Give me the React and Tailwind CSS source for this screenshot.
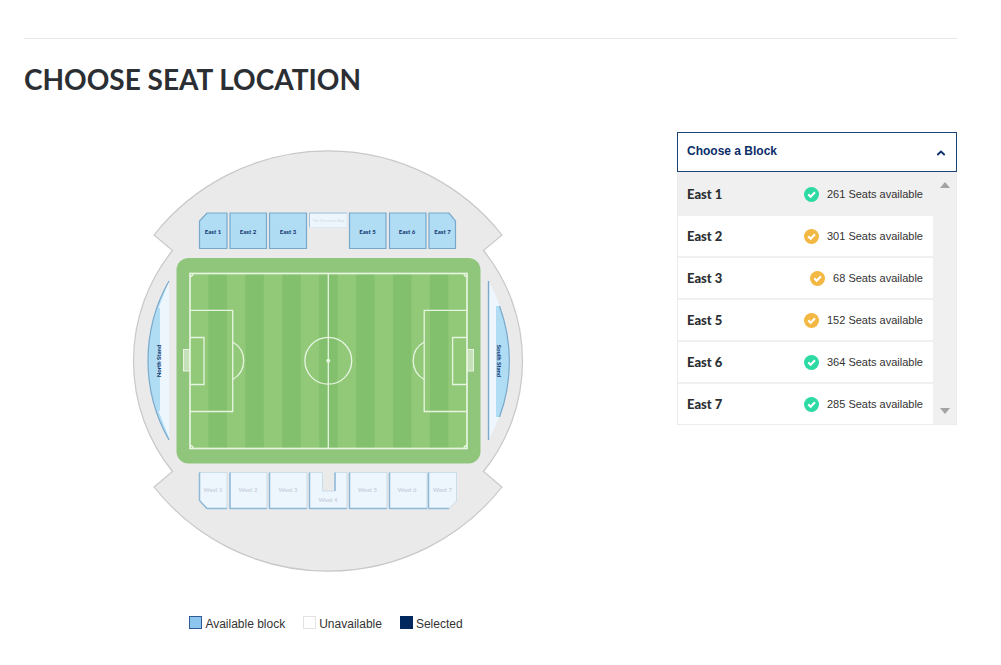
import React, { useState } from "react";

const blocks = [
  { name: "East 1", seats: 261, color: "#2edaa3" },
  { name: "East 2", seats: 301, color: "#f3b843" },
  { name: "East 3", seats: 68, color: "#f3b843" },
  { name: "East 5", seats: 152, color: "#f3b843" },
  { name: "East 6", seats: 364, color: "#2edaa3" },
  { name: "East 7", seats: 285, color: "#2edaa3" },
];

const eastStand = [
  { name: "East 1", x: 213, points: "207,213 227,213 227,248.5 199.5,248.5 199.5,221" },
  { name: "East 2", x: 248, points: "230,213 266.5,213 266.5,248.5 230,248.5" },
  { name: "East 3", x: 288, points: "269.5,213 306.5,213 306.5,248.5 269.5,248.5" },
  { name: "East 5", x: 367.5, points: "349.5,213 386,213 386,248.5 349.5,248.5" },
  { name: "East 6", x: 407, points: "389.5,213 426,213 426,248.5 389.5,248.5" },
  { name: "East 7", x: 442.5, points: "429,213 449,213 455.5,221 455.5,248.5 429,248.5" },
];

// edge is the shaded left / bottom side of each closed block
const westStand = [
  { name: "West 1", x: 213, y: 492, points: "199.5,472.5 227,472.5 227,508.5 207,508.5 199.5,500.5", edge: "M199.5 472.5V500.5L207 508.5H227" },
  { name: "West 2", x: 248, y: 492, points: "230,472.5 267,472.5 267,508.5 230,508.5", edge: "M230 472.5V508.5H267" },
  { name: "West 3", x: 288, y: 492, points: "269.5,472.5 307,472.5 307,508.5 269.5,508.5", edge: "M269.5 472.5V508.5H307" },
  { name: "West 4", x: 328, y: 502, points: "309.5,472.5 322.5,472.5 322.5,491 335,491 335,472.5 347,472.5 347,508.5 309.5,508.5", edge: "M309.5 472.5V508.5H347M335 491V472.5" },
  { name: "West 5", x: 367.5, y: 492, points: "349.5,472.5 387,472.5 387,508.5 349.5,508.5", edge: "M349.5 472.5V508.5H387" },
  { name: "West 6", x: 407, y: 492, points: "389.5,472.5 427,472.5 427,508.5 389.5,508.5", edge: "M389.5 472.5V508.5H427" },
  { name: "West 7", x: 442.5, y: 492, points: "428.5,472.5 456.5,472.5 456.5,501 449,508.5 428.5,508.5", edge: "M428.5 472.5V508.5H449" },
];

const stripes = [0, 1, 2, 3, 4, 5, 6];

const Pitch = () => (
  <g>
    <rect x="176.5" y="258" width="304" height="205.5" rx="12" fill="#90c67c" />
    <rect x="190" y="273.5" width="277" height="175" fill="#91c979" />
    {stripes.map((i) => (
      <rect key={i} x={208.5 + i * 36.9} y="273.5" width="18.45" height="175" fill="#83c06e" />
    ))}
    <g fill="none" stroke="#e6f4e0" strokeWidth="1.3">
      <rect x="190" y="273.5" width="277" height="175" strokeWidth="1.7" />
      <path d="M328.3 273.5V448.5" />
      <circle cx="328.3" cy="360.8" r="23.4" />
      <path d="M190 310.3H232.7V411.5H190M190 337.5H204V384.5H190" />
      <path d="M232.7 342A21.5 21.5 0 0 1 232.7 379.5" />
      <path d="M467 310.3H424.2V411.5H467M467 337.5H452.6V384.5H467" />
      <path d="M424.2 342A21.5 21.5 0 0 0 424.2 379.5" />
      <path d="M193 273.5A3 3 0 0 1 190 276.5M464 273.5A3 3 0 0 0 467 276.5M193 448.5A3 3 0 0 0 190 445.5M464 448.5A3 3 0 0 1 467 445.5" />
    </g>
    <g fill="#c5e1b9" stroke="#e6f4e0">
      <rect x="183.5" y="349.5" width="6" height="21.5" />
      <rect x="467.5" y="349.5" width="6" height="21.5" />
    </g>
    <circle cx="328.3" cy="360.8" r="2" fill="#e6f4e0" />
  </g>
);

const StadiumMap = () => (
  <svg
    viewBox="128 146 400 430"
    role="img"
    aria-label="Stadium map"
    className="w-full max-w-[400px] font-['Lato',sans-serif] text-[6px] font-black"
  >
    <path
      d="M154 235A222 222 0 0 1 502 235L483.5 250.5A176 176 0 0 1 483.5 471.5L502 487A222 222 0 0 1 154 487L172.5 471.5A176 176 0 0 1 172.5 250.5Z"
      fill="#eaeaea"
      stroke="#c8c8c8"
      strokeWidth="1.2"
    />
    <Pitch />

    {/* North stand */}
    <path d="M169 281A161 161 0 0 0 169 440Z" fill="#b0dcf4" />
    <path d="M169 281L160 308V411H158.5L169 438Z" fill="#edf6fd" />
    <path d="M169 281L158.5 308H161L169 300Z" fill="#edf6fd" />
    <path d="M169 281A161 161 0 0 0 169 440" fill="none" stroke="#78a9cb" strokeWidth="1.2" />
    <text transform="translate(160.5 361) rotate(-90)" textAnchor="middle" fill="#173e75">North Stand</text>

    {/* South stand */}
    <path d="M488.5 281A161 161 0 0 1 488.5 440Z" fill="#edf6fd" />
    <path d="M496 306H499.5A161 161 0 0 1 499.5 417H496Z" fill="#b0dcf4" />
    <path d="M499.5 306A161 161 0 0 1 499.5 417" fill="none" stroke="#78a9cb" strokeWidth="1.2" />
    <path d="M488.5 281V440" stroke="#78a9cb" strokeWidth="1.4" />
    <text transform="translate(496.5 361) rotate(90)" textAnchor="middle" fill="#173e75">South Stand</text>

    {eastStand.map((b) => (
      <g key={b.name}>
        <polygon points={b.points} fill="#b0dcf4" stroke="#78a9cb" strokeWidth="1.2" />
        <text x={b.x} y="234" textAnchor="middle" fill="#173e75">{b.name}</text>
      </g>
    ))}

    <rect x="309.5" y="213" width="37.5" height="14.5" fill="#edf6fd" stroke="#dfe8ef" />
    <path d="M309.5 227V213H347" fill="none" stroke="#9fc2da" />
    <text x="328.5" y="221.5" textAnchor="middle" fill="#cfd8e4" className="text-[4px] font-normal">The Directors Box</text>

    {westStand.map((b) => (
      <g key={b.name}>
        <polygon points={b.points} fill="#edf6fd" stroke="#c3d8e6" strokeWidth="0.8" />
        <path d={b.edge} fill="none" stroke="#8fb9d6" strokeWidth="1.5" />
        <text x={b.x} y={b.y} textAnchor="middle" fill="#c9d0de" className="font-bold">{b.name}</text>
      </g>
    ))}
  </svg>
);

const CheckIcon = ({ color }) => (
  <svg viewBox="0 0 15 15" className="size-[15px]" aria-hidden="true">
    <circle cx="7.5" cy="7.5" r="7.5" fill={color} />
    <path d="M4.3 7.4L6.7 9.7L11 5.3" fill="none" stroke="#fff" strokeWidth="2.2" />
  </svg>
);

const BlockPicker = () => {
  const [open, setOpen] = useState(true);
  const [selected, setSelected] = useState("East 1");

  return (
    <div>
      <button
        type="button"
        aria-haspopup="listbox"
        aria-expanded={open}
        onClick={() => setOpen(!open)}
        className="flex h-10 w-full items-center justify-between border border-[#1d4379] bg-white pr-[10px] pl-[9px] text-[#0b2e69]"
      >
        <span className="pb-[2px] text-[12px] leading-4 font-bold">Choose a Block</span>
        <svg viewBox="0 0 10 6" className="mt-[2px] h-[6px] w-[10px]" aria-hidden="true">
          <path d="M1.3 5L5 1.5L8.7 5" fill="none" stroke="currentColor" strokeWidth="1.8" />
        </svg>
      </button>

      {open && (
        <div className="flex border border-t-0 border-[#ececec] bg-[#f0f0f0]">
          <ul role="listbox" aria-label="Blocks" className="flex-1">
            {blocks.map((block) => (
              <li
                key={block.name}
                role="option"
                aria-selected={selected === block.name}
                onClick={() => setSelected(block.name)}
                className={`flex h-[42px] cursor-pointer items-center border-[#f0f0f0] px-[10px] pl-[9px] not-last:border-b-2 first:h-11 first:pt-[2px] last:h-10 ${
                  selected === block.name ? "bg-[#f0f0f0]" : "bg-white"
                }`}
              >
                <span className="flex-1 font-['Lato',sans-serif] text-[13px] leading-5 font-black text-[#2b2f33]">
                  {block.name}
                </span>
                <CheckIcon color={block.color} />
                <span className="pl-2 text-[11px] leading-4 text-[#333]">{block.seats} Seats available</span>
              </li>
            ))}
          </ul>
          <div className="flex w-[23px] flex-col items-center justify-between py-[10px]" aria-hidden="true">
            <svg viewBox="0 0 10 6" className="h-[6px] w-[10px]"><path d="M0 6L5 0L10 6Z" fill="#a3a3a3" /></svg>
            <svg viewBox="0 0 10 6" className="h-[6px] w-[10px]"><path d="M0 0L5 6L10 0Z" fill="#a3a3a3" /></svg>
          </div>
        </div>
      )}
    </div>
  );
};

const App = () => {
  return (
    <main className="min-h-screen bg-white pt-[38px] pr-11 pb-8 pl-6 font-['Liberation_Sans',sans-serif] text-[#333]">
      <hr className="border-[#e6e6e6]" />
      <h1 className="mt-5 font-['Lato',sans-serif] text-[28px] leading-10 font-bold text-[#2b2f33]">
        CHOOSE SEAT LOCATION
      </h1>

      <div className="mt-[33px] grid grid-cols-[minmax(0,1fr)_280px] gap-[45px]">
        <div className="flex flex-col items-center pt-[14px]">
          <StadiumMap />

          {/* Legend */}
          <ul className="mt-[38px] flex gap-[18px] pr-1 text-[12px] leading-5">
            <li className="flex items-center gap-[3px]">
              <span className="mb-1 size-[13px] border border-[#2f5c94] bg-[#8cc5ed]" />
              Available block
            </li>
            <li className="flex items-center gap-[3px]">
              <span className="mb-1 size-[13px] border border-[#e3e3e3] bg-white" />
              Unavailable
            </li>
            <li className="flex items-center gap-[3px]">
              <span className="mb-1 size-[13px] bg-[#00285f]" />
              Selected
            </li>
          </ul>
        </div>

        <BlockPicker />
      </div>
    </main>
  );
};

export default App;
